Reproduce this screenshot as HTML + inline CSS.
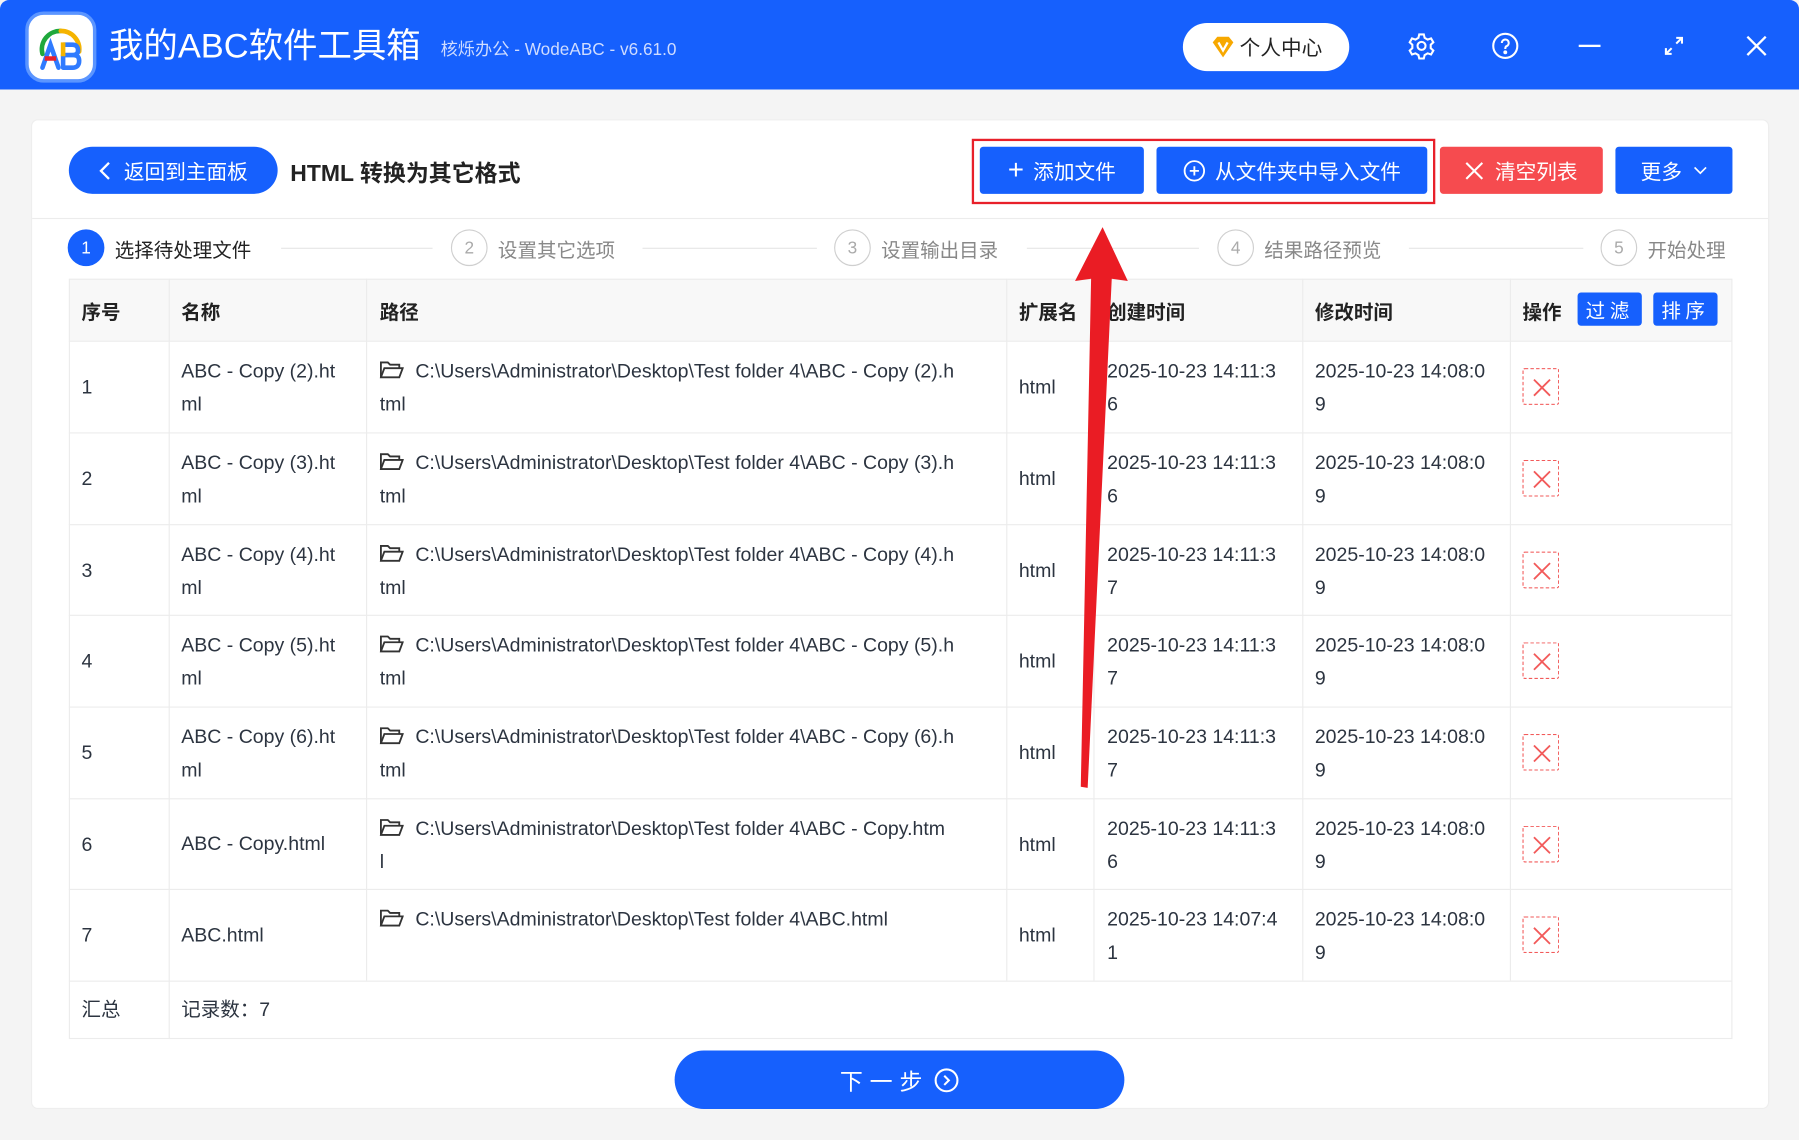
<!DOCTYPE html>
<html><head><meta charset="utf-8"><style>
*{box-sizing:border-box;margin:0;padding:0}
html,body{width:1799px;height:1140px;overflow:hidden;background:#f3f3f3}
body{font-family:"Liberation Sans","Noto Sans CJK SC",sans-serif;color:#333}
#w{position:absolute;left:0;top:0;width:1568px;height:994px;transform-origin:0 0;transform:scale(1.14732,1.14688);background:#f4f4f4}
.a{position:absolute}
.hdr{left:0;top:0;width:1568px;height:78px;background:#1660fd;border-radius:8px 8px 0 0}
.btn{position:absolute;color:#fff;display:flex;align-items:center;justify-content:center;font-size:18px}
.b{background:#1660fd}
.cell{position:absolute;font-size:17px;line-height:29px;color:#2c3440}
.vl{position:absolute;width:1px;background:#ececec;top:243px;height:663px}
.hl{position:absolute;height:1px;background:#ececec;left:60px;width:1450px}
.th{position:absolute;top:258px;font-size:17px;font-weight:bold;color:#222}
.circ{position:absolute;top:200px;width:32px;height:32px;border-radius:50%;border:1.5px solid #cfcfcf;color:#aaa;font-size:15px;display:flex;align-items:center;justify-content:center}
.st{position:absolute;top:204px;font-size:17px;color:#888}
.sl{position:absolute;top:216px;height:1px;background:#e6e6e6}
.del{position:absolute;left:1327px;width:32px;height:32px;border:1px dashed #f25a5a;border-radius:2px}
.del svg{position:absolute;left:6px;top:6px}
</style></head><body><div id="w">
<div class="a hdr"></div>
<div class="a" style="left:22px;top:10px;width:62px;height:62px;border-radius:16px;background:#fff;border:3px solid #5b95ff">
<svg width="56" height="56" viewBox="0 0 56 56" style="position:absolute;left:0;top:0"><path d="M12 34 A16 16 0 0 1 28 14" stroke="#1fa83c" stroke-width="4" fill="none" stroke-linecap="round"/><path d="M28 14 A16 16 0 0 1 44 32" stroke="#f5b400" stroke-width="4" fill="none" stroke-linecap="round"/><path d="M12 46 L19 26 L26 46" stroke="#2f7bff" stroke-width="4" fill="none" stroke-linecap="round"/><path d="M14 38 H24" stroke="#e8202a" stroke-width="4"/><path d="M30 26 H38 Q43 26 43 31 Q43 35 38 35 H30 M30 35 H39 Q44 35 44 40 Q44 46 38 46 H30 Z" stroke="#2f7bff" stroke-width="4" fill="none" stroke-linejoin="round"/><path d="M30 24 V36" stroke="#f5b400" stroke-width="4"/></svg></div>
<div class="a" style="left:95px;top:20px;font-size:30px;color:#fff;line-height:42px">我的ABC软件工具箱</div>
<div class="a" style="left:384px;top:32px;font-size:15px;color:#cfdcff">核烁办公 - WodeABC - v6.61.0</div>
<div class="a" style="left:1031px;top:20px;width:145px;height:42px;border-radius:21px;background:#fff;font-size:18px;color:#222;display:flex;align-items:center;justify-content:center;gap:4px"><svg width="22" height="20" viewBox="0 0 22 20"><path d="M2 6 L6 1 H16 L20 6 L11 19 Z" fill="#f7a800"/><path d="M7 6 L11 13 L15 6" stroke="#fff" stroke-width="2" fill="none"/></svg>个人中心</div>
<svg class="a" style="left:1227px;top:28px" width="24" height="24" viewBox="0 0 24 24" fill="none" stroke="#fff" stroke-width="1.8"><circle cx="12" cy="12" r="3.5"/><path d="M10 2h4l.7 3 2.6 1.5 3-1 2 3.4-2.3 2.1v3l2.3 2.1-2 3.4-3-1-2.6 1.5-.7 3h-4l-.7-3-2.6-1.5-3 1-2-3.4 2.3-2.1v-3L1.7 8.9l2-3.4 3 1L9.3 5z"/></svg>
<svg class="a" style="left:1300px;top:28px" width="24" height="24" viewBox="0 0 24 24" fill="none" stroke="#fff" stroke-width="1.8"><circle cx="12" cy="12" r="10.5"/><path d="M9 9.5a3 3 0 1 1 4 2.8c-1 .5-1 1.2-1 2.4"/><circle cx="12" cy="17.6" r=".8" fill="#fff"/></svg>
<div class="a" style="left:1376px;top:39px;width:19px;height:2px;background:#fff"></div>
<svg class="a" style="left:1449px;top:30px" width="20" height="20" viewBox="0 0 20 20" stroke="#fff" stroke-width="1.8" fill="none"><path d="M12 3h5v5M17 3l-5 5M8 17H3v-5M3 17l5-5"/></svg>
<svg class="a" style="left:1522px;top:31px" width="18" height="18" viewBox="0 0 18 18" stroke="#fff" stroke-width="2"><path d="M1 1L17 17M17 1L1 17"/></svg>

<div class="a" style="left:27px;top:104px;width:1515px;height:863px;background:#fff;border-radius:6px;border:1px solid #eee"></div>
<div class="a" style="left:28px;top:190px;width:1513px;height:1px;background:#ececec"></div>
<div class="btn b" style="left:60px;top:128px;width:182px;height:41px;border-radius:21px;gap:10px"><svg width="12" height="16" viewBox="0 0 12 16"><path d="M9 1L2 8l7 7" stroke="#fff" stroke-width="2" fill="none"/></svg>返回到主面板</div>
<div class="a" style="left:253px;top:135px;font-size:20px;font-weight:bold;color:#222">HTML 转换为其它格式</div>
<div class="a" style="left:847px;top:121px;width:404px;height:57px;border:2px solid #e8202a"></div>
<div class="btn b" style="left:854px;top:128px;width:143px;height:41px;border-radius:3px;gap:8px"><span style="font-size:24px;font-weight:300">+</span>添加文件</div>
<div class="btn b" style="left:1008px;top:128px;width:236px;height:41px;border-radius:3px;gap:8px"><svg width="20" height="20" viewBox="0 0 20 20" stroke="#fff" stroke-width="1.6" fill="none"><circle cx="10" cy="10" r="8.5"/><path d="M10 6v8M6 10h8"/></svg>从文件夹中导入文件</div>
<div class="btn" style="left:1255px;top:128px;width:142px;height:41px;border-radius:3px;background:#f64b4f;gap:10px"><svg width="16" height="16" viewBox="0 0 16 16" stroke="#fff" stroke-width="1.8"><path d="M1 1L15 15M15 1L1 15"/></svg>清空列表</div>
<div class="btn b" style="left:1408px;top:128px;width:102px;height:41px;border-radius:3px;gap:10px">更多<svg width="12" height="8" viewBox="0 0 12 8"><path d="M1 1l5 5 5-5" stroke="#fff" stroke-width="1.5" fill="none"/></svg></div>

<div class="circ" style="left:59px;background:#1660fd;border-color:#1660fd;color:#fff">1</div>
<div class="st" style="left:100px;color:#222">选择待处理文件</div>
<div class="sl" style="left:245px;width:132px"></div>
<div class="circ" style="left:393px">2</div><div class="st" style="left:434px">设置其它选项</div>
<div class="sl" style="left:560px;width:152px"></div>
<div class="circ" style="left:727px">3</div><div class="st" style="left:768px">设置输出目录</div>
<div class="sl" style="left:895px;width:150px"></div>
<div class="circ" style="left:1061px">4</div><div class="st" style="left:1102px">结果路径预览</div>
<div class="sl" style="left:1228px;width:152px"></div>
<div class="circ" style="left:1395px">5</div><div class="st" style="left:1436px">开始处理</div>

<div class="a" style="left:60px;top:243px;width:1450px;height:54px;background:#f8f8f8"></div>
<div class="a" style="left:60px;top:243px;width:1450px;height:663px;border:1px solid #ececec"></div>
<div class="vl" style="left:147px"></div><div class="vl" style="left:319px;height:612px"></div><div class="vl" style="left:877px;height:612px"></div><div class="vl" style="left:953px;height:612px"></div><div class="vl" style="left:1135px;height:612px"></div><div class="vl" style="left:1316px;height:612px"></div>
<div class="hl" style="top:297px"></div><div class="hl" style="top:377px"></div><div class="hl" style="top:457px"></div><div class="hl" style="top:536px"></div><div class="hl" style="top:616px"></div><div class="hl" style="top:696px"></div><div class="hl" style="top:775px"></div><div class="hl" style="top:855px"></div>
<div class="th" style="left:71px">序号</div><div class="th" style="left:158px">名称</div><div class="th" style="left:331px">路径</div><div class="th" style="left:888px">扩展名</div><div class="th" style="left:965px">创建时间</div><div class="th" style="left:1146px">修改时间</div><div class="th" style="left:1327px">操作</div>
<div class="btn b" style="left:1375px;top:255px;width:56px;height:29px;border-radius:3px;font-size:17px;letter-spacing:4px">过滤</div>
<div class="btn b" style="left:1441px;top:255px;width:56px;height:29px;border-radius:3px;font-size:17px;letter-spacing:4px">排序</div>

<div id="rows"></div>
<script>
var R=[[297,"(2)","6"],[377,"(3)","6"],[457,"(4)","7"],[536,"(5)","7"],[616,"(6)","7"]];
var h="";
function folder(x,y){return '<svg class="a" style="left:'+x+'px;top:'+y+'px" width="21" height="17" viewBox="0 0 21 17" fill="none" stroke="#333" stroke-width="1.6"><path d="M1 15V2h6l2 2h8v3"/><path d="M1 15l3-8h16l-3 8z"/></svg>';}
function del(y){return '<div class="del" style="top:'+y+'px"><svg width="20" height="20" viewBox="0 0 20 20" stroke="#f25a5a" stroke-width="1.6"><path d="M3 3L17 17M17 3L3 17"/></svg></div>';}
function row(y,n,name,p1,p2,c1,c2){var t=y+12;
h+='<div class="cell" style="left:71px;top:'+(y+26)+'px">'+n+'</div>';
h+='<div class="cell" style="left:158px;top:'+t+'px">'+name+'</div>';
h+=folder(331,t+5);
h+='<div class="cell" style="left:362px;top:'+t+'px;white-space:nowrap">'+p1+'</div>';
if(p2)h+='<div class="cell" style="left:331px;top:'+(t+29)+'px">'+p2+'</div>';
h+='<div class="cell" style="left:888px;top:'+(y+26)+'px">html</div>';
h+='<div class="cell" style="left:965px;top:'+t+'px">'+c1+'</div>';
h+='<div class="cell" style="left:1146px;top:'+t+'px">'+c2+'</div>';
h+=del(y+24);}
R.forEach(function(r,i){row(r[0],i+1,"ABC - Copy "+r[1]+".ht<br>ml","C:\\Users\\Administrator\\Desktop\\Test folder 4\\ABC - Copy "+r[1]+".h","tml","2025-10-23 14:11:3<br>"+r[2],"2025-10-23 14:08:0<br>9");});
row(696,6,"<span style='line-height:80px;position:relative;top:-12px'>ABC - Copy.html</span>","C:\\Users\\Administrator\\Desktop\\Test folder 4\\ABC - Copy.htm","l","2025-10-23 14:11:3<br>6","2025-10-23 14:08:0<br>9");
row(775,7,"","C:\\Users\\Administrator\\Desktop\\Test folder 4\\ABC.html","","2025-10-23 14:07:4<br>1","2025-10-23 14:08:0<br>9");
h+='<div class="cell" style="left:158px;top:801px">ABC.html</div>';
document.getElementById("rows").innerHTML=h;
</script>
<style>#rows .cell:nth-child(1){}</style>
<div class="cell" style="left:71px;top:866px">汇总</div>
<div class="cell" style="left:158px;top:866px">记录数：7</div>
<div class="cell" style="left:362px;top:801px;display:none"></div>

<div class="btn b" style="left:588px;top:916px;width:392px;height:51px;border-radius:26px;font-size:20px;letter-spacing:6px;gap:4px">下一步<svg width="22" height="22" viewBox="0 0 22 22" stroke="#fff" stroke-width="1.8" fill="none"><circle cx="11" cy="11" r="9.5"/><path d="M9 7l4 4-4 4"/></svg></div>

<svg class="a" style="left:0;top:0" width="1568" height="994"><path d="M961 198 L983 245 L969 243 L948 687 L942 686 L951 243 L937 245 Z" fill="#ea1c24"/></svg>
</div></body></html>
